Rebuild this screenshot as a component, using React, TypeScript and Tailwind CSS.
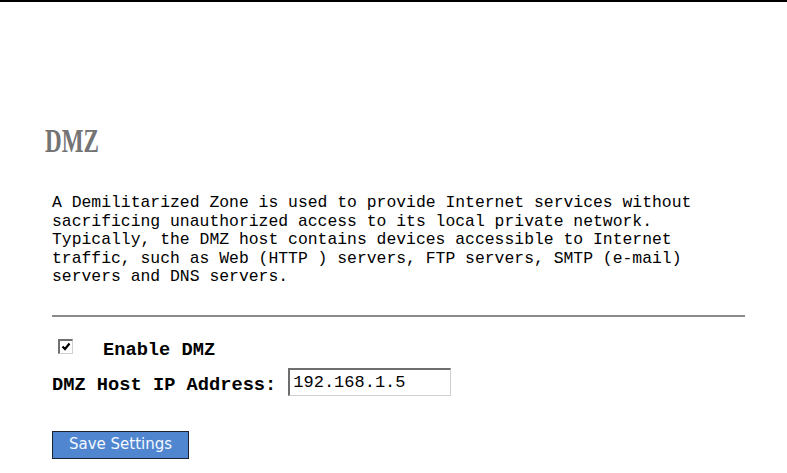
import { useState } from "react";

const mono = { fontFamily: '"Liberation Mono", "DejaVu Sans Mono", monospace' };

export default function App() {
  const [enabled, setEnabled] = useState(true);
  const [hostIp, setHostIp] = useState("192.168.1.5");

  return (
    <div className="w-[787px] h-[473px] bg-white overflow-hidden text-black">
      {/* top frame edge */}
      <div className="h-[2px] bg-black" />

      <div className="pl-[52px]">
        {/* Title */}
        <h1
          className="mt-[123px] -ml-[7px] text-[33px] leading-none font-bold text-[#747474] inline-block scale-x-[0.7] origin-left"
          style={{ fontFamily: '"Liberation Serif", "Times New Roman", serif' }}
        >
          DMZ
        </h1>

        {/* Description */}
        <p className="mt-[36px] text-[16.4px] leading-[18.5px] whitespace-nowrap text-black" style={mono}>
          A Demilitarized Zone is used to provide Internet services without
          <br />
          sacrificing unauthorized access to its local private network.
          <br />
          Typically, the DMZ host contains devices accessible to Internet
          <br />
          traffic, such as Web (HTTP ) servers, FTP servers, SMTP (e-mail)
          <br />
          servers and DNS servers.
        </p>

        <div className="mt-[28px] h-[2px] w-[693px] bg-[#8a8a8a]" />

        {/* Enable checkbox */}
        <label className="mt-[22px] flex items-start cursor-pointer">
          <span
            onClick={() => setEnabled(!enabled)}
            className="ml-[6px] w-[15px] h-[15px] flex items-center justify-center bg-white border-t-2 border-l-2 border-b border-r border-t-[#707070] border-l-[#707070] border-b-[#d0d0d0] border-r-[#d0d0d0]"
          >
            {enabled && (
              <svg width="10" height="9" viewBox="0 0 10 9">
                <path d="M1.5 4.5 L4 7 L8.5 1.5" fill="none" stroke="#000" strokeWidth="2.2" />
              </svg>
            )}
          </span>
          <span className="ml-[30px] mt-[1px] text-[18.7px] leading-[20px] font-bold" style={mono}>
            Enable DMZ
          </span>
        </label>

        {/* Host IP */}
        <div className="mt-[8px] flex items-start">
          <span className="mt-[7px] text-[18.7px] leading-[20px] font-bold whitespace-nowrap" style={mono}>
            DMZ Host IP Address:
          </span>
          <input
            value={hostIp}
            onChange={(e) => setHostIp(e.target.value)}
            className="ml-[12px] w-[163px] h-[28px] pl-[3px] pt-[1px] text-[17px] bg-white outline-none border-t-2 border-l-2 border-b border-r border-t-[#6e6e6e] border-l-[#6e6e6e] border-b-[#cfcfcf] border-r-[#cfcfcf]"
            style={mono}
          />
        </div>

        {/* Save */}
        <button
          className="mt-[35px] w-[137px] h-[28px] bg-[#4f86cf] border border-[#1d2330] text-[#f4f8ff] text-[15px] leading-none"
          style={{ fontFamily: '"DejaVu Sans", "Liberation Sans", sans-serif' }}
        >
          Save Settings
        </button>
      </div>
    </div>
  );
}
